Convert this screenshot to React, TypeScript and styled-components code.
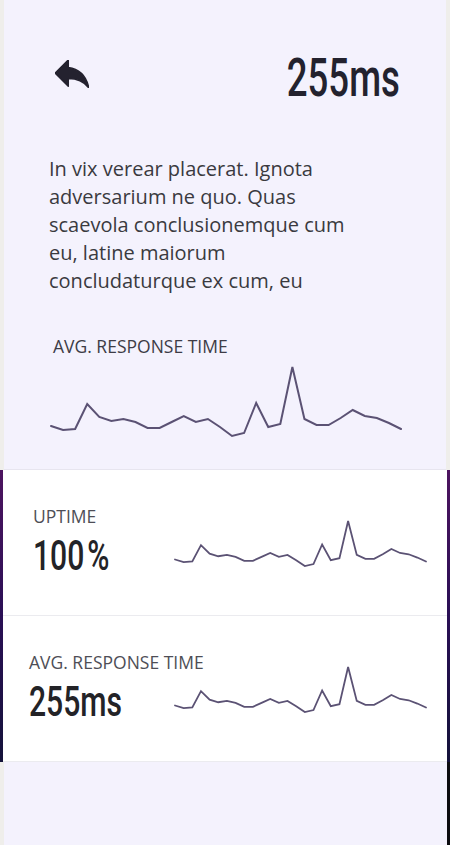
import React from "react";
import styled, { createGlobalStyle } from "styled-components";

const GlobalStyle = createGlobalStyle`
  html, body {
    margin: 0;
    padding: 0;
    background: #efeeeb;
  }
  #root {
    min-height: 100vh;
    display: flex;
    flex-direction: column;
  }
`;

const Page = styled.main`
  flex: 1;
  display: flex;
  flex-direction: column;
  font-family: "Open Sans", "Liberation Sans", sans-serif;
`;

const Hero = styled.section`
  margin: 0 4px;
  background: #f4f2fd;
  padding: 52px 46px 30px 45px;
  display: flex;
  flex-direction: column;
  border-bottom: 1px solid #e7e5ef;
`;

const Header = styled.header`
  display: flex;
  justify-content: space-between;
  align-items: flex-start;
  height: 53px;
`;

const BackButton = styled.button`
  border: 0;
  background: none;
  padding: 0;
  margin: 8px 0 0 6px;
  width: 34px;
  height: 28px;
  color: #24222f;
  display: flex;
  cursor: pointer;
`;

const HeroValue = styled.div`
  font-family: Roboto, "Liberation Sans", sans-serif;
  font-weight: 500;
  font-size: 53px;
  line-height: 53px;
  color: #23222e;
  white-space: nowrap;
  transform: scaleX(0.69);
  transform-origin: right center;
`;

const Intro = styled.p`
  margin: 50px 0 0 0;
  max-width: 322px;
  font-size: 20px;
  line-height: 28px;
  color: #3a3a3f;
`;

const SectionLabel = styled.div<{ $indent?: number }>`
  margin: 39px 0 0 ${(p) => p.$indent ?? 0}px;
  font-size: 17.5px;
  line-height: 24px;
  color: #3d3c46;
  white-space: nowrap;
`;

const ChartSvg = styled.svg<{ $top: number; $left?: number }>`
  display: block;
  margin: ${(p) => p.$top}px 0 0 ${(p) => p.$left ?? 0}px;
  overflow: visible;
`;

const CardsFrame = styled.div`
  padding: 0 3px;
  background: linear-gradient(180deg, #4d145f 0%, #2a0f55 50%, #14123a 100%);
  display: flex;
  flex-direction: column;
`;

const Card = styled.article<{ $inset: number }>`
  box-sizing: border-box;
  height: 146px;
  background: #ffffff;
  border-bottom: 1px solid #ebebef;
  padding: 34px 21px 0 ${(p) => p.$inset}px;
  display: grid;
  grid-template-columns: minmax(0, 1fr) 251px;
  align-items: start;
`;

const CardText = styled.div`
  display: flex;
  flex-direction: column;
  min-width: 0;
`;

const CardLabel = styled.div`
  font-size: 17.5px;
  line-height: 24px;
  color: #4e4e56;
  white-space: nowrap;
`;

const CardValue = styled.div`
  margin-top: 6px;
  font-family: Roboto, "Liberation Sans", sans-serif;
  font-weight: 500;
  font-size: 43px;
  line-height: 43px;
  color: #232327;
  white-space: nowrap;
  transform: scaleX(0.7);
  transform-origin: left center;
`;

const Percent = styled.span`
  margin-left: 4px;
`;

const Footer = styled.div`
  flex: 1;
  margin-left: 4px;
  background: #f4f2fd;
  border-right: 3px solid #0c0c10;
`;

const DATA = [
  62, 66, 65, 40, 53, 57, 55, 58, 64, 64, 58, 52, 58, 55, 63, 72, 69, 39, 63, 60,
  3, 55, 61, 61, 54, 46, 52, 54, 59, 65,
];

const POINTS = DATA.map((y, i) => `${((350 / (DATA.length - 1)) * i).toFixed(2)},${y}`).join(" ");

type SparkProps = { width: number; height: number; top: number; left?: number; stroke: number };

const Sparkline = ({ width, height, top, left, stroke }: SparkProps) => (
  <ChartSvg
    width={width}
    height={height}
    viewBox="0 0 350 75"
    preserveAspectRatio="none"
    $top={top}
    $left={left}
  >
    <polyline
      points={POINTS}
      fill="none"
      stroke="#5b5274"
      strokeWidth={stroke}
      strokeLinejoin="miter"
      strokeLinecap="round"
      vectorEffect="non-scaling-stroke"
    />
  </ChartSvg>
);

const ReplyIcon = () => (
  <svg width="34" height="28" viewBox="3 5 18 15" fill="currentColor" aria-hidden="true">
    <path
      d="M10 9V5l-7 7 7 7v-4.1c5 0 8.5 1.6 11 5.1-1-5-4-10-11-11z"
      stroke="currentColor"
      strokeWidth="0.8"
      strokeLinejoin="round"
    />
  </svg>
);

const metrics = [
  { label: "UPTIME", value: "100", unit: "%", inset: 30 },
  { label: "AVG. RESPONSE TIME", value: "255ms", unit: "", inset: 26 },
];

export default function App() {
  return (
    <>
      <GlobalStyle />
      <Page>
        <Hero>
          <Header>
            <BackButton aria-label="Back">
              <ReplyIcon />
            </BackButton>
            <HeroValue>255ms</HeroValue>
          </Header>
          <Intro>
            In vix verear placerat. Ignota adversarium ne quo. Quas scaevola conclusionemque cum eu,
            latine maiorum concludaturque ex cum, eu
          </Intro>
          <SectionLabel $indent={4}>AVG. RESPONSE TIME</SectionLabel>
          <Sparkline width={350} height={75} top={6} left={2} stroke={2} />
        </Hero>
        <CardsFrame>
          {metrics.map((m) => (
            <Card key={m.label} $inset={m.inset}>
              <CardText>
                <CardLabel>{m.label}</CardLabel>
                <CardValue>
                  {m.value}
                  {m.unit && <Percent>{m.unit}</Percent>}
                </CardValue>
              </CardText>
              <Sparkline width={251} height={49} top={15} stroke={1.8} />
            </Card>
          ))}
        </CardsFrame>
        <Footer />
      </Page>
    </>
  );
}
